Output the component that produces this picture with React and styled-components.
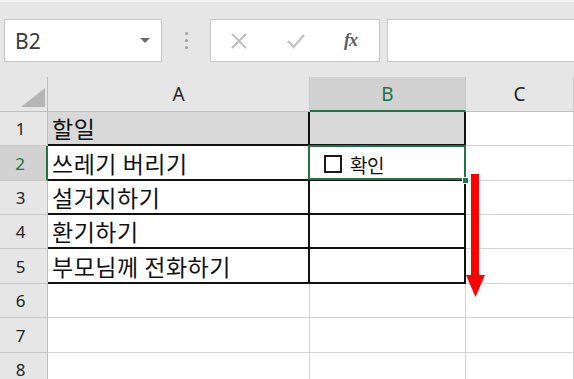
import React from "react";
import styled, { createGlobalStyle, css } from "styled-components";

const Global = createGlobalStyle`
  html, body { margin: 0; padding: 0; background: #fff; }
  body { font-family: "Noto Sans", "Noto Sans CJK KR", sans-serif; }
  * { box-sizing: border-box; }
`;

const GREEN = "#217346";
const GRID = "#d4d4d4";

const Root = styled.div`
  position: relative;
  width: 574px;
  height: 379px;
  overflow: hidden;
  background: #fff;
`;

const Toolbar = styled.div`
  height: 77px;
  background: #e6e6e6;
  border-top: 2px solid #f3f3f3;
  display: flex;
  align-items: flex-start;
  padding: 17px 0 0 4px;
`;

const NameBox = styled.div`
  width: 158px;
  height: 43px;
  background: #fff;
  border: 1px solid #c6c6c6;
  display: flex;
  align-items: center;
  justify-content: space-between;
  padding: 0 11px 0 10px;
  font-family: "Noto Sans", sans-serif;
  font-size: 21px;
  color: #3a3a3a;
`;

const Caret = styled.span`
  width: 0;
  height: 0;
  border-left: 5px solid transparent;
  border-right: 5px solid transparent;
  border-top: 5px solid #6b6b6b;
`;

const Grip = styled.div`
  width: 48px;
  height: 43px;
  display: flex;
  flex-direction: column;
  align-items: center;
  justify-content: center;
  gap: 4px;
`;

const Dot = styled.span`
  width: 3px;
  height: 3px;
  border-radius: 50%;
  background: #9e9e9e;
`;

const FxBox = styled.div`
  width: 170px;
  height: 43px;
  background: #fff;
  border: 1px solid #c6c6c6;
  display: flex;
  align-items: center;
  padding-left: 19px;
  gap: 38px;
`;

const FxText = styled.span`
  font-family: "Liberation Serif", serif;
  font-style: italic;
  font-weight: bold;
  font-size: 18px;
  color: #5e5e5e;
  letter-spacing: -1px;
`;

const Formula = styled.div`
  flex: 1;
  height: 43px;
  margin-left: 7px;
  margin-right: -10px;
  background: #fff;
  border: 1px solid #c6c6c6;
`;

const Sheet = styled.div`
  display: grid;
  grid-template-columns: 48px 262px 156px 1fr;
  grid-template-rows: 35px 34px 35px 34px 34px 35px 34px 35px 34px;
`;

const Corner = styled.div`
  background: #e6e6e6;
  border-right: 1px solid #bdbdbd;
  border-bottom: 1px solid #bdbdbd;
  position: relative;
`;

const ColHead = styled.div`
  display: flex;
  align-items: center;
  justify-content: center;
  font-family: "Noto Sans", sans-serif;
  font-size: 19px;
  color: #222;
  background: ${(p) => (p.$sel ? "#d2d2d2" : "#e6e6e6")};
  border-right: 1px solid #c8c8c8;
  border-bottom: ${(p) => (p.$sel ? `2px solid ${GREEN}` : "1px solid #bdbdbd")};
  ${(p) => p.$sel && css`color: ${GREEN};`}
`;

const RowHead = styled.div`
  display: flex;
  align-items: center;
  justify-content: center;
  padding-right: 6px;
  font-family: "Noto Sans", sans-serif;
  font-size: 17px;
  background: ${(p) => (p.$sel ? "#d2d2d2" : "#e6e6e6")};
  color: ${(p) => (p.$sel ? GREEN : "#222")};
  border-bottom: 1px solid #c8c8c8;
  border-right: ${(p) => (p.$sel ? `2px solid ${GREEN}` : "1px solid #bdbdbd")};
`;

const Cell = styled.div`
  position: relative;
  display: flex;
  align-items: center;
  padding-left: 4px;
  font-family: "Noto Sans CJK KR", sans-serif;
  font-size: 23px;
  letter-spacing: 0.5px;
  color: #111;
  background: ${(p) => (p.$fill ? "#d9d9d9" : "#fff")};
  border-right: ${(p) => (p.$boxed ? "2px solid #111" : `1px solid ${GRID}`)};
  border-bottom: ${(p) => (p.$boxed ? "2px solid #111" : `1px solid ${GRID}`)};
  ${(p) =>
    p.$active &&
    css`
      &::after {
        content: "";
        position: absolute;
        left: -2px;
        top: -1px;
        right: -2px;
        bottom: -1px;
        border: 2px solid ${GREEN};
        pointer-events: none;
      }
    `}
`;

const Handle = styled.span`
  position: absolute;
  right: -5px;
  bottom: -5px;
  width: 7px;
  height: 7px;
  background: ${GREEN};
  border: 1px solid #fff;
  z-index: 2;
`;

const CheckLabel = styled.span`
  display: flex;
  align-items: center;
  gap: 8px;
  margin-left: 10px;
  margin-top: 3px;
  font-family: "Noto Sans CJK KR", sans-serif;
  font-size: 19px;
  letter-spacing: -0.5px;
`;

const Box = styled.span`
  flex-shrink: 0;
  display: block;
  width: 18px;
  height: 18px;
  border: 2px solid #1a1a1a;
  background: #fff;
`;

const Arrow = styled.svg`
  position: absolute;
  left: 466px;
  top: 172px;
`;

const Triangle = styled.svg`
  position: absolute;
  left: 21px;
  bottom: 4px;
`;

const rows = [
  { n: 1, a: "할일", b: null, fill: true, boxed: true },
  { n: 2, a: "쓰레기 버리기", b: "check", boxed: true, sel: true },
  { n: 3, a: "설거지하기", boxed: true },
  { n: 4, a: "환기하기", boxed: true },
  { n: 5, a: "부모님께 전화하기", boxed: true },
  { n: 6 },
  { n: 7 },
  { n: 8 },
];

export default function App() {
  return (
    <Root>
      <Global />
      <Toolbar>
        <NameBox>
          <span>B2</span>
          <Caret />
        </NameBox>
        <Grip>
          <Dot />
          <Dot />
          <Dot />
        </Grip>
        <FxBox>
          <svg width="18" height="18" viewBox="0 0 18 18">
            <path d="M2 2 L16 16 M16 2 L2 16" stroke="#bdbdbd" strokeWidth="1.8" fill="none" />
          </svg>
          <svg width="20" height="18" viewBox="0 0 20 18">
            <path d="M2 9 L7.5 15 L18 3" stroke="#c4c4c4" strokeWidth="2.4" fill="none" />
          </svg>
          <FxText>fx</FxText>
        </FxBox>
        <Formula />
      </Toolbar>
      <Sheet>
        <Corner>
          <Triangle width="24" height="19" viewBox="0 0 24 19">
            <polygon points="24,0 24,19 0,19" fill="#b5b5b5" />
          </Triangle>
        </Corner>
        <ColHead>A</ColHead>
        <ColHead $sel>B</ColHead>
        <ColHead>C</ColHead>
        {rows.map((r) => (
          <React.Fragment key={r.n}>
            <RowHead $sel={r.sel}>{r.n}</RowHead>
            <Cell $fill={r.fill} $boxed={r.boxed}>
              {r.a}
            </Cell>
            <Cell $fill={r.fill} $boxed={r.boxed} $active={r.sel}>
              {r.b === "check" && (
                <CheckLabel>
                  <Box />
                  확인
                </CheckLabel>
              )}
              {r.sel && <Handle />}
            </Cell>
            <Cell />
          </React.Fragment>
        ))}
      </Sheet>
      <Arrow width="22" height="128" viewBox="0 0 22 128">
        <rect x="5" y="2" width="8" height="104" fill="#ff0000" />
        <polygon points="0,103 19,103 9.5,125" fill="#ff0000" />
      </Arrow>
    </Root>
  );
}
